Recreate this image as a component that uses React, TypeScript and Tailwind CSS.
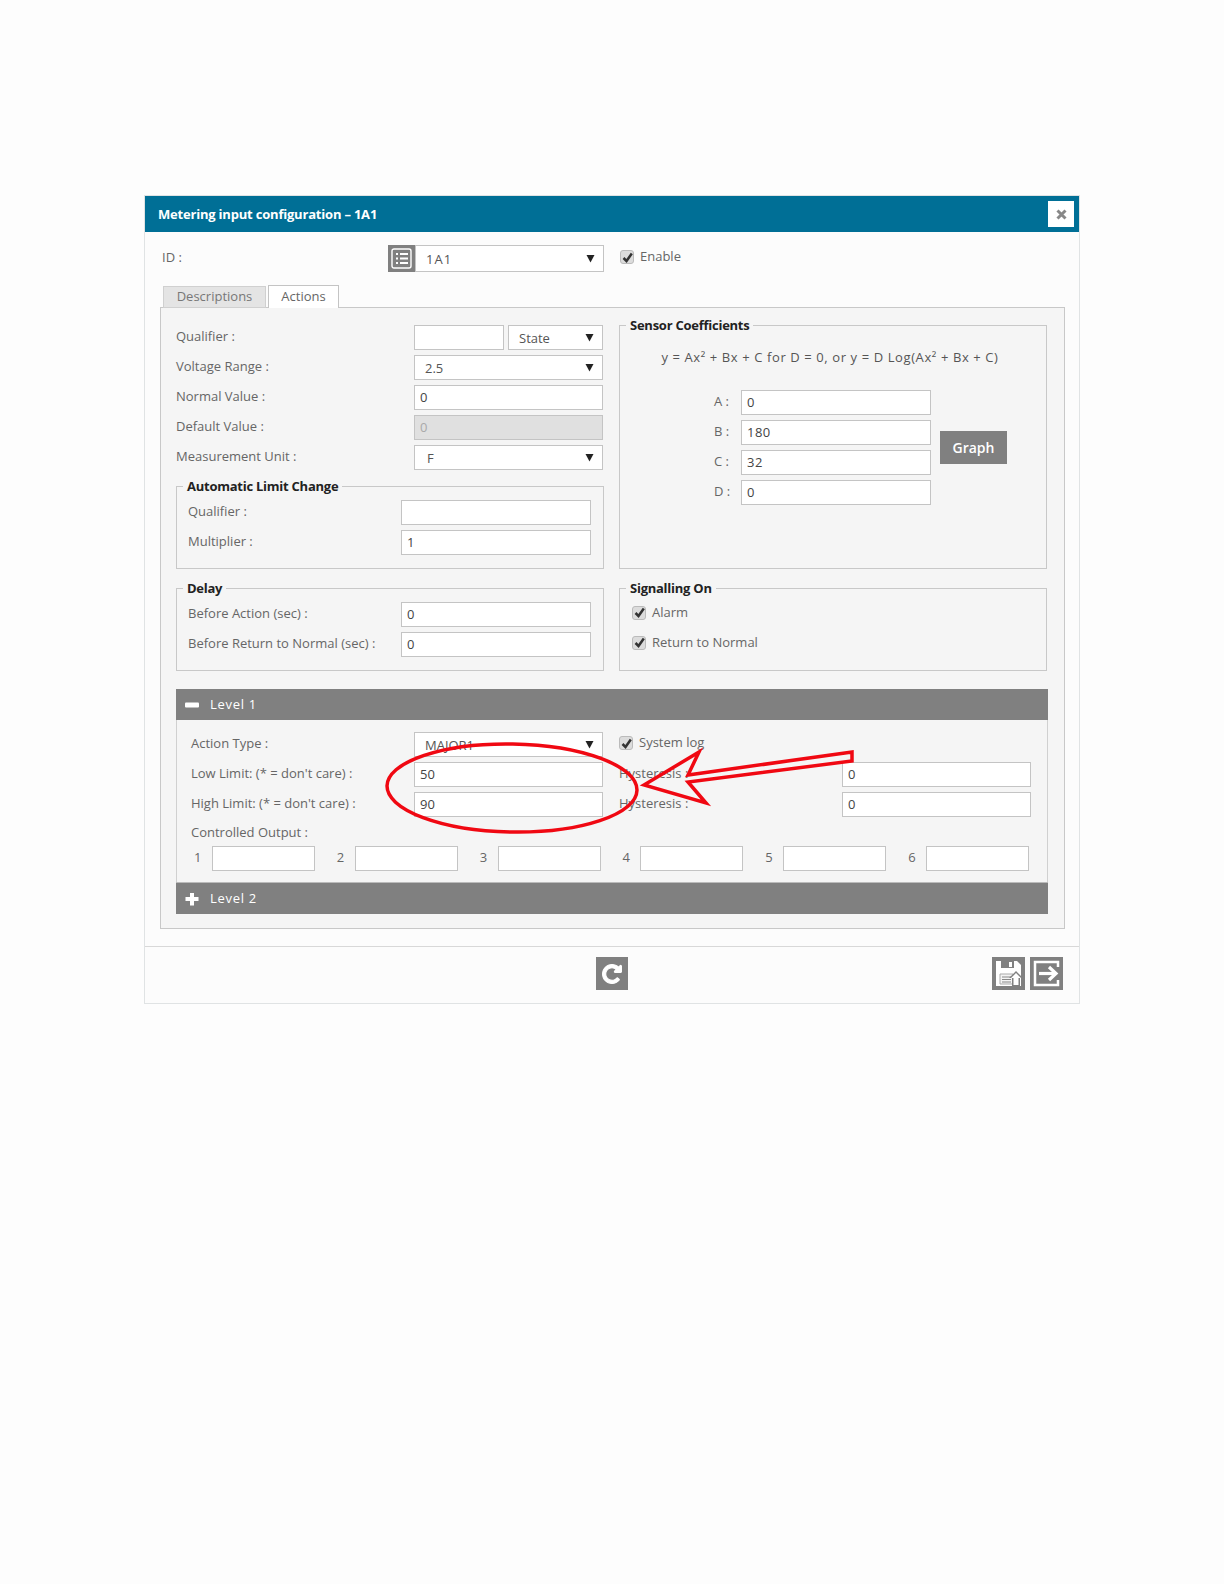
import React from "react";

const Input = ({ value = "", disabled = false, className = "" }: { value?: string; disabled?: boolean; className?: string }) => (
  <div className={`h-[25px] flex items-center border border-[#c4c4c4] pl-[5px] text-[13px] shrink-0 ${disabled ? "bg-[#e0e0e0] text-[#aaa]" : "bg-white text-[#444]"} ${className}`}>
    {value}
  </div>
);

const Select = ({ value, pl = "pl-[10px]", className = "" }: { value: string; pl?: string; className?: string }) => (
  <div className={`h-[25px] flex items-center justify-between border border-[#c4c4c4] bg-white ${pl} pr-[8px] text-[13px] text-[#555] shrink-0 ${className}`}>
    <span className="pt-[2px]">{value}</span>
    <svg width="9" height="9" viewBox="0 0 9 9"><path d="M0.5 1h8L4.500 8.500z" fill="#222" /></svg>
  </div>
);

const Label = ({ children, className = "" }: { children: React.ReactNode; className?: string }) => (
  <span className={`inline-block pb-[5px] text-[13px] text-[#666] whitespace-nowrap ${className}`}>{children}</span>
);

const Row = ({ label, children, labelWidth }: { label: string; children: React.ReactNode; labelWidth: string }) => (
  <div className="flex items-center h-[25px]">
    <div className={`${labelWidth} shrink-0`}><Label>{label}</Label></div>
    {children}
  </div>
);

const Check = ({ label, className = "" }: { label: string; className?: string }) => (
  <div className={`flex items-center gap-[6px] h-[15px] ${className}`}>
    <span className="w-[14px] h-[14px] shrink-0 rounded-[3px] border border-[#bbb] bg-[#dcdcdc] flex items-center justify-center">
      <svg width="11" height="11" viewBox="0 0 11 11"><path d="M1.500 6l3 3L9.800 1.500" fill="none" stroke="#333" strokeWidth="2.500" /></svg>
    </span>
    <Label className="!pb-0">{label}</Label>
  </div>
);

const Group = ({ title, className = "", children }: { title: string; className?: string; children: React.ReactNode }) => (
  <div className={`relative border border-[#c8c8c8] ${className}`}>
    <span className="absolute left-[6px] -top-[10px] bg-[#f5f5f5] px-[4px] text-[13px] tracking-[-0.25px] leading-[18px] font-bold text-[#222] whitespace-nowrap">{title}</span>
    {children}
  </div>
);

const LevelHeader = ({ icon, title, className = "" }: { icon: React.ReactNode; title: string; className?: string }) => (
  <div className={`flex items-center gap-[11px] bg-[#808080] pl-[9px] text-white text-[13px] tracking-[0.7px] ${className}`}>
    <span className="w-[14px] flex justify-center">{icon}</span>
    <span>{title}</span>
  </div>
);

export default function App() {
  return (
    <div className="min-h-[1584px] bg-[#fdfdfd] pt-[195px] pl-[144px] [font-family:'Open_Sans','Noto_Sans',sans-serif]">
      <div className="relative w-[936px] h-[809px] border border-[#e0e3e4] bg-[#fcfcfc]">
        <div className="flex items-center justify-between h-[36px] bg-[#006f96] pl-[13px] pr-[5px]">
          <span className="text-white text-[13px] font-bold tracking-[-0.2px] pt-[1px]">Metering input configuration – 1A1</span>
          <span className="w-[26px] h-[26px] bg-white flex items-center justify-center">
            <svg width="11" height="11" viewBox="0 0 11 11"><path d="M1.500 1.500l8 8M9.500 1.500l-8 8" stroke="#888" strokeWidth="3" /></svg>
          </span>
        </div>

        <div className="flex items-center h-[27px] mt-[13px] pl-[17px]">
          <div className="w-[226px]"><Label>ID :</Label></div>
          <span className="w-[27px] h-[27px] bg-[#808080] flex items-center justify-center">
            <svg width="21" height="21" viewBox="0 0 21 21" fill="none" stroke="#fff">
              <rect x="1" y="1" width="19" height="19" rx="2" strokeWidth="1.400" />
              <path d="M5 6h2M9 6h8M5 10.500h2M9 10.500h8M5 15h2M9 15h8" strokeWidth="2" />
            </svg>
          </span>
          <Select value="1A1" className="!h-[27px] w-[189px] tracking-[1px]" />
          <Check label="Enable" className="ml-[16px] mb-[3px]" />
        </div>

        <div className="flex items-end h-[23px] mt-[13px] pl-[18px] gap-[2px] relative z-10">
          <div className="h-[22px] w-[103px] bg-[#e4e4e4] border border-[#d0d0d0] flex items-center justify-center"><Label className="!pb-0 text-[#777]">Descriptions</Label></div>
          <div className="h-[23px] w-[71px] bg-white border border-b-0 border-[#c4c4c4] flex items-center justify-center"><Label className="!pb-0">Actions</Label></div>
        </div>

        <div className="relative ml-[15px] w-[905px] h-[622px] -mt-[1px] border border-[#c8c8c8] bg-[#f5f5f5] pt-[17px] pl-[15px]">
          <div className="flex gap-[15px]">
            <div className="w-[428px]">
              <div className="flex flex-col gap-[5px]">
                <Row label="Qualifier :" labelWidth="w-[238px]">
                  <Input className="w-[90px]" />
                  <Select value="State" className="w-[95px] ml-[4px]" />
                </Row>
                <Row label="Voltage Range :" labelWidth="w-[238px]"><Select value="2.5" className="w-[189px]" /></Row>
                <Row label="Normal Value :" labelWidth="w-[238px]"><Input value="0" className="w-[189px]" /></Row>
                <Row label="Default Value :" labelWidth="w-[238px]"><Input value="0" disabled className="w-[189px]" /></Row>
                <Row label="Measurement Unit :" labelWidth="w-[238px]"><Select value="F" pl="pl-[12px]" className="w-[189px]" /></Row>
              </div>
              <Group title="Automatic Limit Change" className="mt-[16px] h-[83px] pt-[13px] pl-[11px] flex flex-col gap-[5px]">
                <Row label="Qualifier :" labelWidth="w-[213px]"><Input className="w-[190px]" /></Row>
                <Row label="Multiplier :" labelWidth="w-[213px]"><Input value="1" className="w-[190px]" /></Row>
              </Group>
              <Group title="Delay" className="mt-[19px] h-[83px] pt-[13px] pl-[11px] flex flex-col gap-[5px]">
                <Row label="Before Action (sec) :" labelWidth="w-[213px]"><Input value="0" className="w-[190px]" /></Row>
                <Row label="Before Return to Normal (sec) :" labelWidth="w-[213px]"><Input value="0" className="w-[190px]" /></Row>
              </Group>
            </div>

            <div className="w-[428px]">
              <Group title="Sensor Coefficients" className="h-[244px] pt-[22px]">
                <div className="text-center text-[13px] tracking-[0.6px] text-[#555] leading-[18px] pr-[6px]">y = Ax² + Bx + C for D = 0, or y = D Log(Ax² + Bx + C)</div>
                <div className="flex items-center mt-[24px] pl-[94px]">
                  <div className="flex flex-col gap-[5px]">
                    {[["A :", "0"], ["B :", "180"], ["C :", "32"], ["D :", "0"]].map(([l, v]) => (
                      <div key={l} className="flex items-center h-[25px]">
                        <Label className="w-[27px] !pb-[2px]">{l}</Label>
                        <Input value={v} className="w-[190px] tracking-[0.5px]" />
                      </div>
                    ))}
                  </div>
                  <div className="ml-[9px] w-[67px] h-[33px] bg-[#808080] flex items-center justify-center text-white text-[14px] font-semibold">Graph</div>
                </div>
              </Group>
              <Group title="Signalling On" className="mt-[19px] h-[83px] pt-[16px] pl-[12px] flex flex-col gap-[15px]">
                <Check label="Alarm" />
                <Check label="Return to Normal" />
              </Group>
            </div>
          </div>

          <div className="mt-[18px] w-[872px]">
            <LevelHeader title="Level 1" icon={<svg width="14" height="6" viewBox="0 0 14 6"><rect width="14" height="5" y="0.500" rx="1" fill="#fff" /></svg>} className="h-[31px]" />
            <div className="h-[162px] border-x border-[#d0d0d0] pt-[12px] pl-[14px]">
              <div className="flex flex-col gap-[5px]">
                <div className="flex items-center h-[25px]">
                  <div className="w-[223px]"><Label>Action Type :</Label></div>
                  <Select value="MAJOR1" className="w-[189px]" />
                  <Check label="System log" className="ml-[16px] mb-[3px]" />
                </div>
                {[["Low Limit: (* = don't care) :", "50"], ["High Limit: (* = don't care) :", "90"]].map(([l, v]) => (
                  <div key={l} className="flex items-center h-[25px]">
                    <div className="w-[223px]"><Label>{l}</Label></div>
                    <Input value={v} className="w-[189px]" />
                    <Label className="ml-[16px] w-[223px] !pb-[2px]">Hysteresis :</Label>
                    <Input value="0" className="w-[189px]" />
                  </div>
                ))}
              </div>
              <div className="mt-[5px] h-[24px] flex items-center"><Label className="!pb-[3px]">Controlled Output :</Label></div>
              <div className="grid grid-cols-6 w-[857px]">
                {["1", "2", "3", "4", "5", "6"].map((n) => (
                  <div key={n} className="flex items-center">
                    <Label className="w-[21px] pl-[3px] !pb-[2px]">{n}</Label>
                    <Input className="w-[103px]" />
                  </div>
                ))}
              </div>
            </div>
            <LevelHeader title="Level 2" icon={<svg width="14" height="14" viewBox="0 0 14 14"><path d="M5 1h4v4h4.500v4H9v4.500H5V9H.5V5H5z" fill="#fff" /></svg>} className="h-[32px] border-t border-[#bbb]" />
          </div>
        </div>

        <div className="mt-[17px] h-[57px] border-t border-[#d8d8d8] grid grid-cols-[1fr_auto_1fr] items-start pt-[10px] px-[16px]">
          <div />
          <span className="w-[32px] h-[33px] bg-[#808080] flex items-center justify-center">
            <svg width="22" height="22" viewBox="0 0 1792 1792"><path fill="#fff" stroke="#fff" strokeWidth="90" d="M1664 256v448q0 26-19 45t-45 19h-448q-42 0-59-40-17-39 14-69l138-138q-148-137-349-137-104 0-198.500 40.500t-163.500 109.500-109.500 163.500-40.500 198.500 40.500 198.500 109.500 163.500 163.500 109.500 198.500 40.500q119 0 225-52t179-147q7-10 23-12 15 0 25 9l137 138q9 8 9.500 20.500t-7.500 22.500q-109 132-264 204.500t-327 72.500q-156 0-298-61t-245-164-164-245-61-298 61-298 164-245 245-164 298-61q147 0 284.500 55.500t244.500 156.500l130-129q29-31 70-14 39 17 39 59z" /></svg>
          </span>
          <div className="flex justify-end gap-[5px]">
            <span className="w-[33px] h-[33px] bg-[#808080] flex items-center justify-center">
              <svg width="29" height="29" viewBox="0 0 29 29">
                <path d="M2 2h21l4 4v21H2z" fill="#fff" />
                <path d="M7 2h13v7H7z" fill="#808080" />
                <path d="M15 3h3v5h-3z" fill="#fff" />
                <path d="M6 15h13v10H6z" fill="#f4f4f4" stroke="#aaa" />
                <path d="M8 18h9M8 20.500h9M8 23h9" stroke="#888" strokeWidth="1.200" />
                <path d="M22 12l7 7h-3v8h-8v-8h-3z" fill="#808080" />
                <path d="M22 14l5 5h-2.500v7h-5v-7H17z" fill="#fff" />
              </svg>
            </span>
            <span className="w-[33px] h-[33px] bg-[#808080] flex items-center justify-center">
              <svg width="29" height="29" viewBox="0 0 29 29" fill="none" stroke="#fff" strokeWidth="2.500">
                <path d="M26 8V3H3v23h23v-5" />
                <path d="M7 14.500h16" strokeWidth="3.200" />
                <path d="M17 8l7 6.500-7 6.500" strokeWidth="3.200" />
              </svg>
            </span>
          </div>
        </div>
      </div>

      <svg className="absolute left-0 top-0 pointer-events-none" width="1224" height="1584" fill="none" stroke="#f00812">
        <ellipse cx="512" cy="788" rx="125" ry="44" strokeWidth="3.500" transform="rotate(1 512 788)" />
        <path d="M644 785L699 752L688 775L852 752L852 761L688 782L706 803Z" strokeWidth="3.500" strokeLinejoin="miter" />
      </svg>
    </div>
  );
}
